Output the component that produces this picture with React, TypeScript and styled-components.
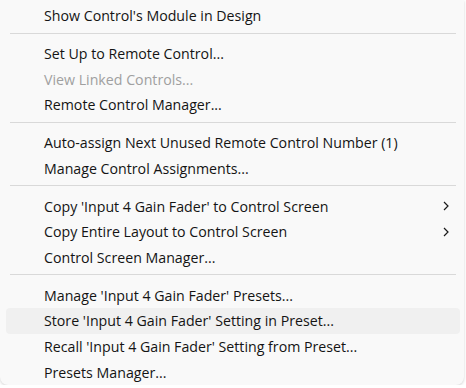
import styled, {createGlobalStyle} from "styled-components";

type Entry =
    | {kind: "item", label: string, disabled?: boolean, submenu?: boolean, active?: boolean}
    | {kind: "sep"}

const entries: Entry[] = [
    {kind: "item", label: "Show Control's Module in Design"},
    {kind: "sep"},
    {kind: "item", label: "Set Up to Remote Control..."},
    {kind: "item", label: "View Linked Controls...", disabled: true},
    {kind: "item", label: "Remote Control Manager..."},
    {kind: "sep"},
    {kind: "item", label: "Auto-assign Next Unused Remote Control Number (1)"},
    {kind: "item", label: "Manage Control Assignments..."},
    {kind: "sep"},
    {kind: "item", label: "Copy 'Input 4 Gain Fader' to Control Screen", submenu: true},
    {kind: "item", label: "Copy Entire Layout to Control Screen", submenu: true},
    {kind: "item", label: "Control Screen Manager..."},
    {kind: "sep"},
    {kind: "item", label: "Manage 'Input 4 Gain Fader' Presets..."},
    {kind: "item", label: "Store 'Input 4 Gain Fader' Setting in Preset...", active: true},
    {kind: "item", label: "Recall 'Input 4 Gain Fader' Setting from Preset..."},
    {kind: "item", label: "Presets Manager..."},
];

export default function App() {
    return (
        <>
            <GlobalStyle/>
            <StyledMenu>
                {entries.map((e, i) => e.kind === "sep"
                    ? <StyledSeparator key={i}/>
                    : (
                        <StyledItem key={i} $active={e.active} $disabled={e.disabled}>
                            <span>{e.label}</span>
                            {e.submenu && (
                                <StyledChevron width="8" height="10" viewBox="0 0 8 10">
                                    <path d="M2 1 L6 5 L2 9" fill="none" stroke="#1a1a1a" strokeWidth="1.2"/>
                                </StyledChevron>
                            )}
                        </StyledItem>
                    ))}
            </StyledMenu>
        </>
    )
}

const GlobalStyle = createGlobalStyle`
    body {
        margin: 0;
        background: #ffffff;
        font-family: "Open Sans", "Noto Sans", sans-serif;
    }
`;

const StyledMenu = styled.div`
    width: 464px;
    height: 385px;
    box-sizing: border-box;
    background-color: #f9f9f9;
    border-radius: 0 0 8px 8px;
    box-shadow: 0 1px 3px rgba(0, 0, 0, 0.18);
    padding: 3px 0 0 0;
    display: flex;
    flex-direction: column;
`;

const StyledItem = styled.div<{$active?: boolean, $disabled?: boolean}>`
    height: 26px;
    margin: 0 4px 0 6px;
    padding: 0 0 0 38px;
    display: flex;
    align-items: center;
    justify-content: space-between;
    border-radius: 4px;
    font-size: 14.2px;
    color: ${p => p.$disabled ? "#a0a0a0" : "#141414"};
    background-color: ${p => p.$active ? "#f0f0f0" : "transparent"};
    white-space: nowrap;
`;

const StyledChevron = styled.svg`
    margin-right: 10px;
`;

const StyledSeparator = styled.div`
    height: 1px;
    margin: 4px 8px 7px 10px;
    background-color: #d9d9d9;
`;
